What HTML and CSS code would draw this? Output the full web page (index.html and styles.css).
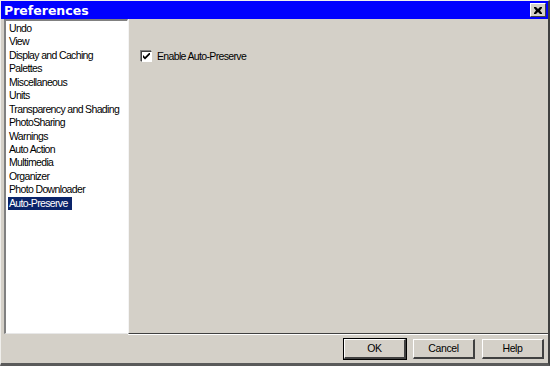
FILE: index.html
```html
<!DOCTYPE html>
<html lang="en">
<head>
    <meta charset="UTF-8">
    <title>Preferences</title>
    <link rel="stylesheet" href="styles.css">
</head>
<body>
    <div class="window">
        <!-- Başlık çubuğu -->
        <div class="titlebar">
            <span class="title">Preferences</span>
            <span class="close-btn">
                <svg width="8" height="7" viewBox="0 0 8 7">
                    <path d="M0 0h2l2 2 2-2h2v1L6 3.5 8 6v1H6L4 5 2 7H0V6l2-2.5L0 1z" fill="#000"/>
                </svg>
            </span>
        </div>

        <div class="main">
            <!-- Sol liste -->
            <ul class="list">
                <li>Undo</li>
                <li>View</li>
                <li>Display and Caching</li>
                <li>Palettes</li>
                <li>Miscellaneous</li>
                <li>Units</li>
                <li>Transparency and Shading</li>
                <li>PhotoSharing</li>
                <li>Warnings</li>
                <li>Auto Action</li>
                <li>Multimedia</li>
                <li>Organizer</li>
                <li>Photo Downloader</li>
                <li class="selected">Auto-Preserve</li>
            </ul>

            <!-- Sağ panel -->
            <div class="panel">
                <label class="check-row">
                    <span class="checkbox">
                        <svg width="7" height="7" viewBox="0 0 7 7">
                            <path d="M0 2l2 2 5-5v2.5L2 6.5 0 4.5z" fill="#000"/>
                        </svg>
                    </span>
                    Enable Auto-Preserve
                </label>
            </div>
        </div>

        <div class="footer">
            <button class="btn btn-default">OK</button>
            <button class="btn">Cancel</button>
            <button class="btn">Help</button>
        </div>
    </div>
</body>
</html>
```

FILE: styles.css
```css
body {
    margin: 0;
    font-family: "Liberation Sans", Arial, sans-serif;
    font-size: 10.5px;
    letter-spacing: -0.65px;
    background-color: #d4d0c8;
}
.window {
    width: 550px;
    height: 366px;
    box-sizing: border-box;
    display: flex;
    flex-direction: column;
    background-color: #d4d0c8;
    border-top: 1px solid #f0efec;
    border-left: 1px solid #f0efec;
    border-right: 2px solid #404040;
    border-bottom: 3px solid #5a5a5a;
}
.titlebar {
    height: 18px;
    background-color: #0000ff;
    display: flex;
    align-items: center;
    justify-content: space-between;
    padding: 0 2px 0 3px;
    flex-shrink: 0;
}
.title {
    color: #fff;
    font-weight: bold;
    font-size: 12.5px;
    letter-spacing: 0;
    font-family: "DejaVu Sans", sans-serif;
}
.close-btn {
    width: 14px;
    height: 12px;
    background-color: #d4d0c8;
    border-top: 1px solid #fff;
    border-left: 1px solid #fff;
    border-right: 1px solid #404040;
    border-bottom: 1px solid #404040;
    display: flex;
    align-items: center;
    justify-content: center;
}
.main {
    display: flex;
    flex: 1;
}
.list {
    list-style: none;
    margin: 0 0 0 3px;
    padding: 1px 0 0 2px;
    width: 119px;
    background-color: #fff;
    border-top: 2px solid #808080;
    border-left: 2px solid #808080;
    border-right: 1px solid #ffffff;
    border-bottom: 1px solid #e8e8e8;
}
.list li {
    height: 13.45px;
    line-height: 13px;
    padding-left: 1px;
    color: #000;
    white-space: nowrap;
}
.list li.selected {
    background-color: #0a246a;
    color: #fff;
    display: inline-block;
    padding-right: 4px;
}
.panel {
    flex: 1;
    border-left: 1px solid #f4f4f4;
    border-bottom: 1px solid #404040;
    box-shadow: 0 1px 0 #fff;
    padding: 31px 12px;
}
.check-row {
    display: flex;
    align-items: center;
    gap: 5px;
    color: #000;
}
.checkbox {
    width: 9px;
    height: 9px;
    background-color: #fff;
    border-top: 1px solid #404040;
    border-left: 1px solid #404040;
    border-right: 1px solid #fff;
    border-bottom: 1px solid #fff;
    box-shadow: -1px -1px 0 #808080;
    display: flex;
    align-items: center;
    justify-content: center;
}
.footer {
    height: 29px;
    display: flex;
    justify-content: flex-end;
    align-items: center;
    gap: 7px;
    padding-right: 4px;
    flex-shrink: 0;
}
.btn {
    width: 62px;
    height: 20px;
    background-color: #d4d0c8;
    font-family: "Liberation Sans", Arial, sans-serif;
    font-size: 10.5px;
    letter-spacing: -0.4px;
    color: #000;
    border-top: 1px solid #fff;
    border-left: 1px solid #fff;
    border-right: 2px solid #404040;
    border-bottom: 2px solid #404040;
    padding: 0;
}
.btn-default {
    outline: 1px solid #000;
}
```
